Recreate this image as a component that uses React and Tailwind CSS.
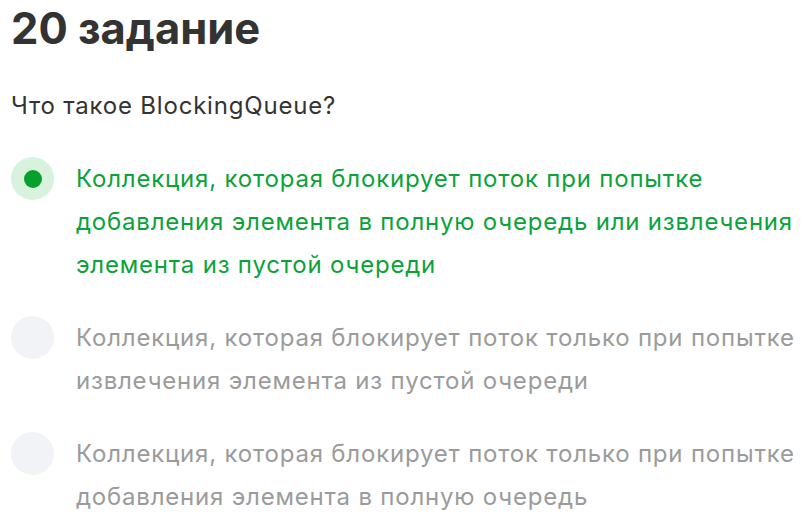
import { useState } from 'react';

const options = [
  'Коллекция, которая блокирует поток при попытке добавления элемента в полную очередь или извлечения элемента из пустой очереди',
  'Коллекция, которая блокирует поток только при попытке извлечения элемента из пустой очереди',
  'Коллекция, которая блокирует поток только при попытке добавления элемента в полную очередь',
];

export default function App() {
  const [selected, setSelected] = useState(0);

  return (
    <div className="w-[805px] h-[532px] bg-white overflow-hidden pl-[11px]" style={{ fontFamily: 'Inter, sans-serif' }}>
      <h1 className="text-[43.5px] leading-[56px] font-bold text-[#333333]">20 задание</h1>
      <p className="mt-[35px] text-[24px] leading-[30px] tracking-[0.8px] text-[#333333]">Что такое BlockingQueue?</p>

      <div className="mt-[36px] flex flex-col gap-[30px]">
        {options.map((text, i) => {
          const active = selected === i;
          return (
            <div key={i} className="flex items-start cursor-pointer" onClick={() => setSelected(i)}>
              <div
                className={`w-[43px] h-[43px] rounded-full shrink-0 flex items-center justify-center ${
                  active ? 'bg-[#d7f3de]' : 'bg-[#f2f3f7]'
                }`}
              >
                {active && <div className="w-[18px] h-[18px] rounded-full bg-[#07a02d]" />}
              </div>
              <p
                className={`ml-[22px] w-[728px] text-[24px] leading-[43px] tracking-[0.8px] ${
                  active ? 'text-[#0aa23a]' : 'text-[#9b9b9b]'
                }`}
              >
                {text}
              </p>
            </div>
          );
        })}
      </div>
    </div>
  );
}
